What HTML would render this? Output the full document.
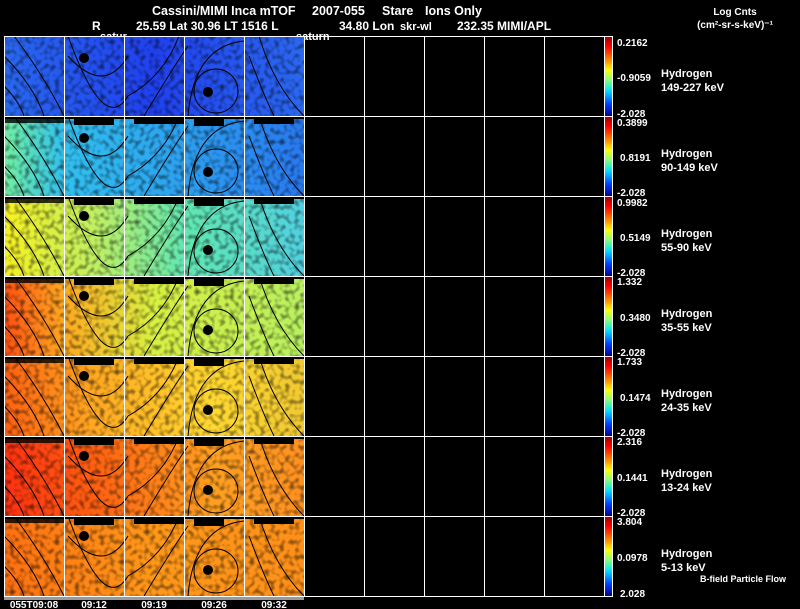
<!DOCTYPE html>
<html><head><meta charset="utf-8"><style>
html,body{margin:0;padding:0;background:#000;width:800px;height:609px;overflow:hidden}
svg{display:block}
text{font-family:"Liberation Sans",sans-serif;fill:#fff;font-weight:bold}
</style></head><body>
<svg width="800" height="609" viewBox="0 0 800 609" xmlns="http://www.w3.org/2000/svg">
<defs>
<linearGradient id="jet" x1="0" y1="0" x2="0" y2="1">
<stop offset="0" stop-color="#a00000"/><stop offset="0.12" stop-color="#ff0000"/><stop offset="0.3" stop-color="#ff9000"/><stop offset="0.42" stop-color="#ffff00"/><stop offset="0.55" stop-color="#80ff80"/><stop offset="0.68" stop-color="#00e0ff"/><stop offset="0.85" stop-color="#0040ff"/><stop offset="1" stop-color="#000090"/></linearGradient>
<linearGradient id="r1" x1="0" x2="1"><stop offset="0" stop-color="#2868f0"/><stop offset="0.5" stop-color="#2040f0"/><stop offset="1" stop-color="#2a68f0"/></linearGradient>
<linearGradient id="r2" x1="0" x2="1"><stop offset="0" stop-color="#70f0a0"/><stop offset="0.2" stop-color="#30c0f0"/><stop offset="0.6" stop-color="#2ca0f0"/><stop offset="1" stop-color="#2878f0"/></linearGradient>
<linearGradient id="r3" x1="0" x2="1"><stop offset="0" stop-color="#f8f020"/><stop offset="0.3" stop-color="#c0f060"/><stop offset="0.6" stop-color="#60e8b0"/><stop offset="1" stop-color="#50d0e0"/></linearGradient>
<linearGradient id="r4" x1="0" x2="1"><stop offset="0" stop-color="#ff5010"/><stop offset="0.2" stop-color="#ffa820"/><stop offset="0.5" stop-color="#d8f040"/><stop offset="1" stop-color="#b8f060"/></linearGradient>
<linearGradient id="r5" x1="0" x2="1"><stop offset="0" stop-color="#ff6010"/><stop offset="0.3" stop-color="#ffa820"/><stop offset="0.7" stop-color="#ffd830"/><stop offset="1" stop-color="#f0c830"/></linearGradient>
<linearGradient id="r6" x1="0" x2="1"><stop offset="0" stop-color="#ff3010"/><stop offset="0.3" stop-color="#ff6010"/><stop offset="0.7" stop-color="#ffa020"/><stop offset="1" stop-color="#ff9020"/></linearGradient>
<linearGradient id="r7" x1="0" x2="1"><stop offset="0" stop-color="#ff7010"/><stop offset="0.5" stop-color="#ff9818"/><stop offset="1" stop-color="#ff9018"/></linearGradient>
<filter id="nz" x="0" y="0" width="1" height="1"><feTurbulence type="fractalNoise" baseFrequency="0.2" numOctaves="1" seed="3"/><feColorMatrix type="matrix" values="0 0 0 0 0  0 0 0 0 0  0 0 0 0 0  0 0 0 1.4 -0.62"/><feComposite in2="SourceGraphic" operator="in"/></filter>
<g id="cont" fill="none" stroke="#000" stroke-width="1">
<path d="M10 0 Q40 40 60 80"/><path d="M0 20 Q30 50 40 80"/><path d="M0 50 Q15 65 20 80"/>
<path d="M64 20 Q100 60 124 20"/><path d="M64 0 Q100 100 124 60"/>
<path d="M124 60 Q160 40 175 0"/><path d="M140 80 Q170 30 184 10"/>
<circle cx="212" cy="55" r="22"/><path d="M184 80 Q190 10 240 5"/>
<path d="M255 0 Q270 50 300 80"/><path d="M245 20 Q260 60 270 80"/>
</g>
<g id="top" fill="#000">
<rect x="0" y="0" width="300" height="3"/>
<rect x="0" y="3" width="60" height="4" opacity="0.8"/>
<rect x="70" y="3" width="40" height="6"/><rect x="130" y="3" width="50" height="5"/><rect x="190" y="3" width="30" height="7"/><rect x="250" y="3" width="40" height="5"/>
</g>
</defs>

<text x="152" y="15" font-size="12.5">Cassini/MIMI Inca mTOF</text>
<text x="312" y="15" font-size="12.5">2007-055</text>
<text x="382" y="15" font-size="12.5">Stare</text>
<text x="425" y="15" font-size="12.5">Ions Only</text>
<text x="92" y="30" font-size="12">R</text>
<text x="136" y="30" font-size="12">25.59 Lat 30.96 LT 1516 L</text>
<text x="339" y="30" font-size="12">34.80 Lon</text>
<text x="457" y="30" font-size="12">232.35  MIMI/APL</text>
<text x="100" y="40" font-size="11">satur</text>
<text x="296" y="40" font-size="11">saturn</text>
<text x="400" y="30" font-size="11">skr-wl</text>
<text x="735" y="15" font-size="10" text-anchor="middle">Log Cnts</text>
<text x="735" y="28" font-size="10" text-anchor="middle">(cm²-sr-s-keV)⁻¹</text>

<g>
<rect x="4" y="36" width="300" height="80" fill="url(#r1)"/>
<rect x="4" y="116" width="300" height="80" fill="url(#r2)"/>
<rect x="4" y="196" width="300" height="80" fill="url(#r3)"/>
<rect x="4" y="276" width="300" height="80" fill="url(#r4)"/>
<rect x="4" y="356" width="300" height="80" fill="url(#r5)"/>
<rect x="4" y="436" width="300" height="80" fill="url(#r6)"/>
<rect x="4" y="516" width="300" height="80" fill="url(#r7)"/>
<rect x="4" y="36" width="300" height="560" fill="#000" filter="url(#nz)"/>
</g>
<g>
<use href="#top" x="4" y="116"/><use href="#top" x="4" y="196"/><use href="#top" x="4" y="276"/><use href="#top" x="4" y="356"/><use href="#top" x="4" y="436"/><use href="#top" x="4" y="516"/>
</g>
<g>
<use href="#cont" x="4" y="36"/><use href="#cont" x="4" y="116"/><use href="#cont" x="4" y="196"/><use href="#cont" x="4" y="276"/><use href="#cont" x="4" y="356"/><use href="#cont" x="4" y="436"/><use href="#cont" x="4" y="516"/>
</g>
<g fill="#000">
<circle cx="84" cy="58" r="5"/><circle cx="84" cy="138" r="5"/><circle cx="84" cy="216" r="5"/><circle cx="84" cy="296" r="5"/><circle cx="84" cy="376" r="5"/><circle cx="84" cy="456" r="5"/><circle cx="84" cy="536" r="5"/>
<circle cx="208" cy="92" r="5"/><circle cx="208" cy="172" r="5"/><circle cx="208" cy="250" r="5"/><circle cx="208" cy="330" r="5"/><circle cx="208" cy="410" r="5"/><circle cx="208" cy="490" r="5"/><circle cx="208" cy="570" r="5"/>
</g>

<g stroke="#fff" stroke-width="1" fill="none">
<rect x="4.5" y="36.5" width="600" height="560"/>
<path d="M64.5 36V596M124.5 36V596M184.5 36V596M244.5 36V596M304.5 36V596M364.5 36V596M424.5 36V596M484.5 36V596M544.5 36V596"/>
<path d="M4 116.5H612M4 196.5H612M4 276.5H612M4 356.5H612M4 436.5H612M4 516.5H612M604 36.5H612M604 596.5H612"/>
<path d="M612.5 36V597"/>
</g>
<rect x="4" y="597" width="300" height="3" fill="#999"/>

<g>
<rect x="605" y="37" width="7" height="79" fill="url(#jet)"/>
<rect x="605" y="117" width="7" height="79" fill="url(#jet)"/>
<rect x="605" y="197" width="7" height="79" fill="url(#jet)"/>
<rect x="605" y="277" width="7" height="79" fill="url(#jet)"/>
<rect x="605" y="357" width="7" height="79" fill="url(#jet)"/>
<rect x="605" y="437" width="7" height="79" fill="url(#jet)"/>
<rect x="605" y="517" width="7" height="79" fill="url(#jet)"/>
</g>
<g font-size="10">
<text x="617" y="46">0.2162</text><text x="617" y="81">-0.9059</text><text x="617" y="117">-2.028</text>
<text x="617" y="126">0.3899</text><text x="620" y="161">0.8191</text><text x="617" y="196">-2.028</text>
<text x="617" y="206">0.9982</text><text x="620" y="241">0.5149</text><text x="617" y="276">-2.028</text>
<text x="617" y="285">1.332</text><text x="620" y="321">0.3480</text><text x="617" y="356">-2.028</text>
<text x="617" y="365">1.733</text><text x="620" y="401">0.1474</text><text x="617" y="436">-2.028</text>
<text x="617" y="445">2.316</text><text x="617" y="481">0.1441</text><text x="617" y="516">-2.028</text>
<text x="617" y="525">3.804</text><text x="617" y="561">0.0978</text><text x="620" y="597">2.028</text>
</g>
<g font-size="11">
<text x="661" y="77">Hydrogen</text><text x="661" y="91">149-227 keV</text>
<text x="661" y="157">Hydrogen</text><text x="661" y="171">90-149 keV</text>
<text x="661" y="237">Hydrogen</text><text x="661" y="251">55-90 keV</text>
<text x="661" y="317">Hydrogen</text><text x="661" y="331">35-55 keV</text>
<text x="661" y="397">Hydrogen</text><text x="661" y="411">24-35 keV</text>
<text x="661" y="477">Hydrogen</text><text x="661" y="491">13-24 keV</text>
<text x="661" y="557">Hydrogen</text><text x="661" y="571">5-13 keV</text>
</g>
<text x="700" y="582" font-size="9">B-field Particle Flow</text>

<g font-size="10" text-anchor="middle">
<text x="34" y="608">055T09:08</text><text x="94" y="608">09:12</text><text x="154" y="608">09:19</text><text x="214" y="608">09:26</text><text x="274" y="608">09:32</text>
</g>
</svg>
</body></html>
